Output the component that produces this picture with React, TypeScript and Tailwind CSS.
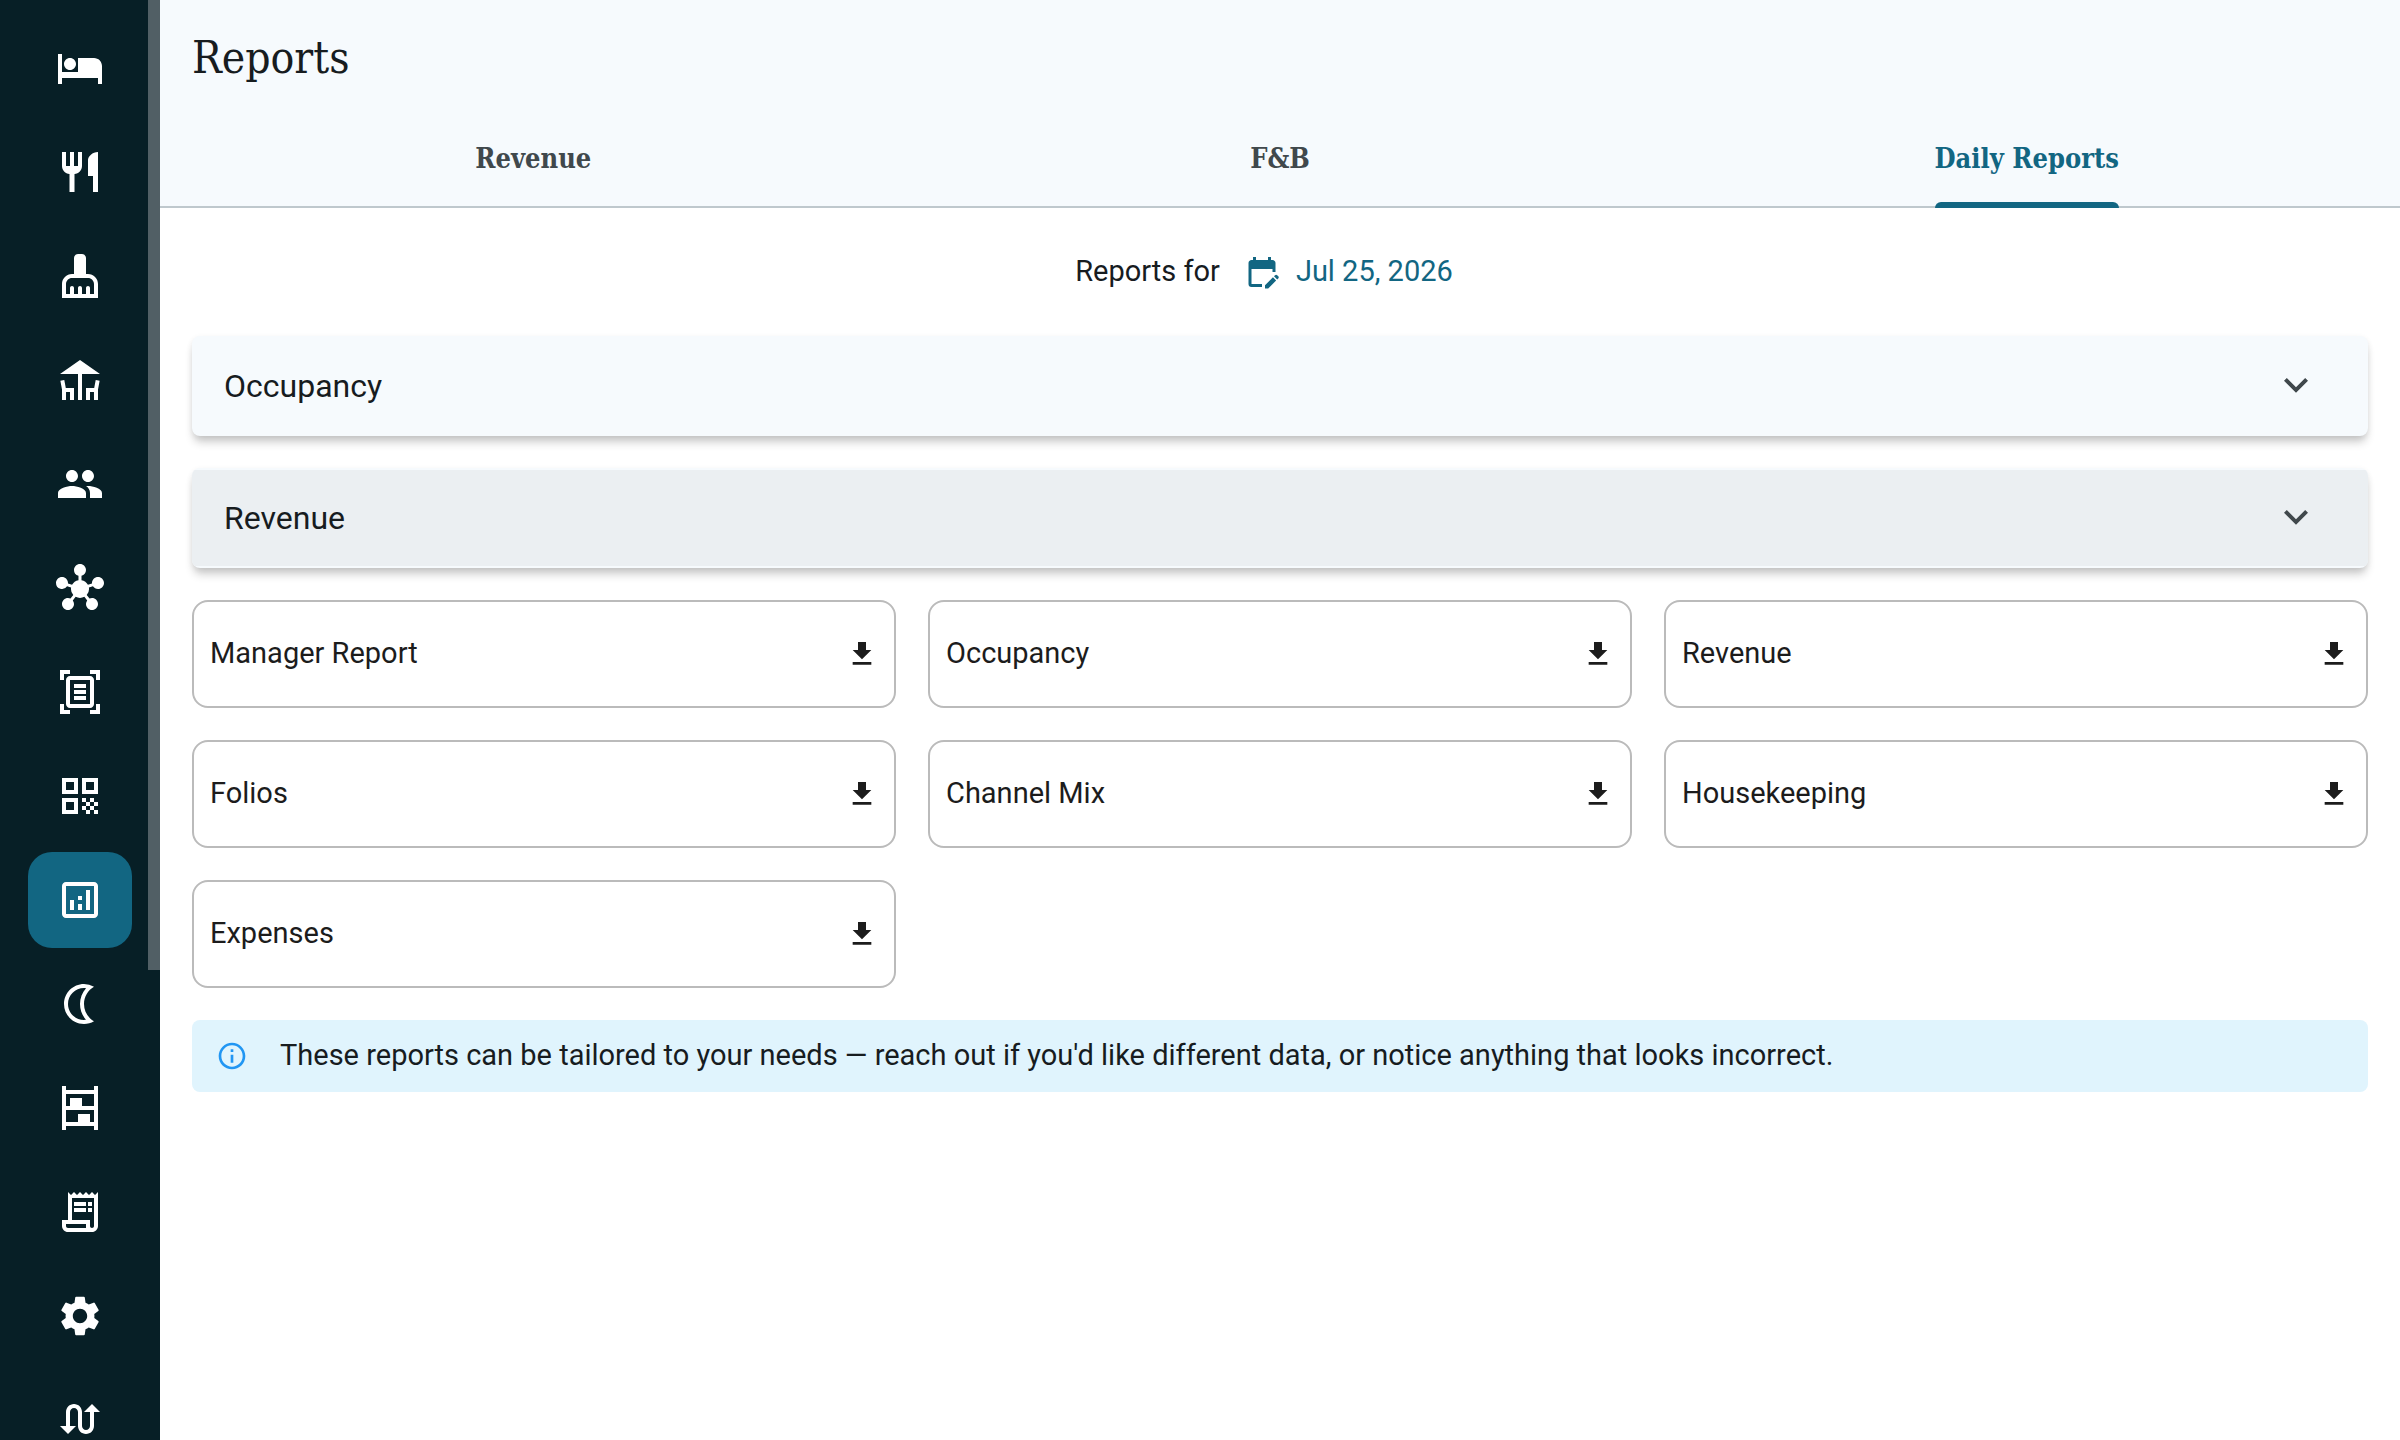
import type { ComponentType } from "react";
import {
  MdDeck,
  MdDownload,
  MdEditCalendar,
  MdGroup,
  MdHotel,
  MdHub,
  MdInfoOutline,
  MdOutlineAnalytics,
  MdOutlineDocumentScanner,
  MdOutlineNightlight,
  MdOutlineReceiptLong,
  MdQrCode,
  MdRestaurant,
  MdSettings,
  MdSwapCalls,
} from "react-icons/md";

type IconType = ComponentType<{ className?: string }>;

function ShelvesIcon({ className }: { className?: string }) {
  return (
    <svg viewBox="0 0 24 24" fill="currentColor" className={className}>
      <path
        fillRule="evenodd"
        d="M19 1v2H5V1H3v22h2v-2h14v2h2V1h-2zM19 5v6h-6V7H7v4H5V5h14zM5 19v-6h14v6h-2v-4h-6v4H5z"
      />
    </svg>
  );
}

function BroomIcon({ className }: { className?: string }) {
  return (
    <svg viewBox="0 0 24 24" fill="currentColor" className={className}>
      <path
        fillRule="evenodd"
        d="M16 11h-1V3c0-1.1-.9-2-2-2h-2c-1.1 0-2 .9-2 2v8H8c-2.76 0-5 2.24-5 5v7h18v-7c0-2.76-2.24-5-5-5zM19 21h-2v-3c0-.55-.45-1-1-1s-1 .45-1 1v3h-2v-3c0-.55-.45-1-1-1s-1 .45-1 1v3H9v-3c0-.55-.45-1-1-1s-1 .45-1 1v3H5v-5c0-1.65 1.35-3 3-3h8c1.65 0 3 1.35 3 3v5z"
      />
    </svg>
  );
}

function ChevronIcon({ className }: { className?: string }) {
  return (
    <svg viewBox="0 -960 960 960" fill="currentColor" className={className}>
      <path d="M480-345 240-585l56-56 184 184 184-184 56 56-240 240Z" />
    </svg>
  );
}

const navItems: { label: string; icon: IconType; active?: boolean }[] = [
  { label: "Rooms", icon: MdHotel },
  { label: "Restaurant", icon: MdRestaurant },
  { label: "Housekeeping", icon: BroomIcon },
  { label: "Outdoor", icon: MdDeck },
  { label: "Guests", icon: MdGroup },
  { label: "Channels", icon: MdHub },
  { label: "Scanner", icon: MdOutlineDocumentScanner },
  { label: "QR codes", icon: MdQrCode },
  { label: "Reports", icon: MdOutlineAnalytics, active: true },
  { label: "Night audit", icon: MdOutlineNightlight },
  { label: "Inventory", icon: ShelvesIcon },
  { label: "Receipts", icon: MdOutlineReceiptLong },
  { label: "Settings", icon: MdSettings },
  { label: "Switch", icon: MdSwapCalls },
];

const tabs = ["Revenue", "F&B", "Daily Reports"];

const reports = [
  "Manager Report",
  "Occupancy",
  "Revenue",
  "Folios",
  "Channel Mix",
  "Housekeeping",
  "Expenses",
];

function Sidebar() {
  return (
    <aside className="relative w-40 shrink-0 overflow-hidden bg-[#071f26]">
      <nav aria-label="Main" className="flex flex-col items-center gap-2 pt-5">
        {navItems.map(({ label, icon: Icon, active }) => (
          <a
            key={label}
            href="#"
            aria-label={label}
            aria-current={active ? "page" : undefined}
            className={
              active
                ? "flex h-24 w-26 shrink-0 items-center justify-center rounded-3xl bg-[#126682] text-white"
                : "flex h-24 w-26 shrink-0 items-center justify-center rounded-3xl text-white"
            }
          >
            <Icon className="size-12" />
          </a>
        ))}
      </nav>
      <div className="absolute top-0 right-0 h-[970px] w-3 bg-[#515f65]" />
    </aside>
  );
}

function Panel({ title, hovered }: { title: string; hovered?: boolean }) {
  return (
    <section className="overflow-hidden rounded-lg bg-[#f6fafd] py-0.5 shadow-[0_8px_10px_-2px_rgba(0,0,0,0.2),0_2px_6px_0_rgba(0,0,0,0.07)]">
      <button
        type="button"
        aria-expanded="false"
        className={
          hovered
            ? "flex h-24 w-full items-center justify-between bg-[#ebeff2] pr-12 pl-8 text-left"
            : "flex h-24 w-full items-center justify-between pr-12 pl-8 text-left"
        }
      >
        <span className="text-[32px]">{title}</span>
        <ChevronIcon className="size-12 text-[#40484c]" />
      </button>
    </section>
  );
}

export default function App() {
  return (
    <div className="flex h-screen overflow-hidden bg-white font-['Roboto',sans-serif] text-[#171c1f]">
      <Sidebar />
      <div className="flex min-w-0 flex-1 flex-col">
        <header className="border-b-2 border-[#bfc8cd] bg-[#f6fafd]">
          <h1 className="px-8 pt-7 font-['DejaVu_Serif_Condensed','DejaVu_Serif',serif] text-[44px] leading-[60px]">
            Reports
          </h1>
          <div role="tablist" className="mt-6 -mb-0.5 flex h-24">
            {tabs.map((tab) => {
              const active = tab === "Daily Reports";
              return (
                <button
                  key={tab}
                  type="button"
                  role="tab"
                  aria-selected={active}
                  className={
                    active
                      ? "flex flex-1 justify-center text-[#126682]"
                      : "flex flex-1 justify-center text-[#40484c]"
                  }
                >
                  <span className="relative flex h-full items-center pb-0.5 font-['DejaVu_Serif_Condensed','DejaVu_Serif',serif] text-[27px] font-bold">
                    {tab}
                    {active && (
                      <span className="absolute inset-x-0 bottom-0 h-1.5 rounded-t-md bg-[#126682]" />
                    )}
                  </span>
                </button>
              );
            })}
          </div>
        </header>

        <main className="flex flex-col gap-8 p-8">
          <div className="flex h-16 items-center justify-center text-[29px]">
            <span>Reports for</span>
            <button type="button" className="flex h-16 items-center gap-4 pr-8 pl-6 text-[#126682]">
              <MdEditCalendar className="size-9" />
              Jul 25, 2026
            </button>
          </div>

          <Panel title="Occupancy" />
          <Panel title="Revenue" hovered />

          <div className="grid grid-cols-3 gap-8">
            {reports.map((name) => (
              <button
                key={name}
                type="button"
                className="flex h-27 items-center justify-between rounded-2xl border-2 border-[#bbbbbb] px-4 text-left text-[29px] text-[#1c1c1c]"
              >
                {name}
                <MdDownload className="size-8" />
              </button>
            ))}
          </div>

          <div role="note" className="flex h-18 items-center gap-8 rounded-lg bg-[#e0f4fd] px-6 text-[29px]">
            <MdInfoOutline className="size-8 shrink-0 text-[#2196f3]" />
            <p>
              These reports can be tailored to your needs — reach out if you'd like different data, or notice
              anything that looks incorrect.
            </p>
          </div>
        </main>
      </div>
    </div>
  );
}
